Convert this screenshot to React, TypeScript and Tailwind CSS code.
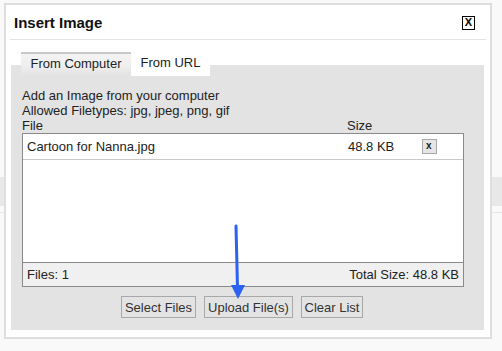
import React from "react";

export default function App() {
  return (
    <div
      className="relative w-[502px] h-[351px] bg-[#f9f9f9] overflow-hidden text-[#222]"
      style={{ fontFamily: '"Liberation Sans", Arial, sans-serif' }}
    >
      {/* page content behind the dialog */}
      <div className="pt-[177px]">
        <div className="h-[29px] bg-[#e8e8e8]" />
        <div className="mt-[6px] h-px bg-[#e4e4e4]" />
      </div>

      {/* dialog */}
      <div className="absolute left-[4px] top-[3px] w-[488px] h-[336px] bg-white border-2 border-[#dedede] flex flex-col">
        <div className="h-[34px] flex items-center justify-between pl-[8px] pr-[15px]">
          <span className="text-[15px] font-bold text-[#111] leading-none mt-[1px]">Insert Image</span>
          <span className="w-[13px] h-[14px] border border-black flex items-center justify-center text-[11px] font-bold text-black leading-none mt-[1px]">
            X
          </span>
        </div>
        <div className="mx-[4px] h-px bg-[#e3e3e3]" />

        {/* tabs */}
        <div className="relative z-10 mt-[12px] ml-[15px] flex h-[24px] text-[13px] leading-[17px]">
          <div className="w-[110px] border-t-2 border-[#c8c8c8] bg-linear-to-b from-[#f3f3f3] via-[#efefef] to-[#e3e3e3] text-center pt-[1px]">
            From Computer
          </div>
          <div className="w-[79px] mt-px bg-white text-center pt-[1px]">From URL</div>
        </div>

        {/* panel */}
        <div className="-mt-[11px] ml-[5px] mr-[6px] h-[265px] bg-[#e3e3e3] pl-[11px] pr-[20px] pt-[23px] text-[13px] leading-[15px]">
          <div>Add an Image from your computer</div>
          <div>Allowed Filetypes: jpg, jpeg, png, gif</div>
          <div className="flex">
            <div className="w-[325px]">File</div>
            <div>Size</div>
          </div>

          <div className="h-[154px] border border-[#8a8a8a] bg-white flex flex-col">
            <div className="h-[26px] border-b border-[#c8c8c8] flex items-center pl-[4px]">
              <div className="w-[321px]">Cartoon for Nanna.jpg</div>
              <div className="w-[74px]">48.8 KB</div>
              <div className="w-[15px] h-[15px] bg-[#e6e6e6] border border-[#a8a8a8] text-[10px] font-bold leading-[11px] pl-[3px] -mt-[1px]">
                x
              </div>
            </div>
            <div className="flex-1" />
            <div className="h-[24px] border-t border-[#8a8a8a] bg-[#f0f0f0] flex items-center justify-between px-[4px]">
              <span>Files: 1</span>
              <span>Total Size: 48.8 KB</span>
            </div>
          </div>

          <div className="mt-[9px] ml-[99px] flex gap-[8px]">
            <div className="h-[22px] w-[75px] border border-[#a8a8a8] flex items-center justify-center text-[#333]">
              Select Files
            </div>
            <div className="h-[22px] w-[89px] border border-[#a8a8a8] flex items-center justify-center text-[#333]">
              Upload File(s)
            </div>
            <div className="h-[22px] w-[62px] border border-[#a8a8a8] flex items-center justify-center text-[#333]">
              Clear List
            </div>
          </div>
        </div>
      </div>

      {/* annotation arrow */}
      <svg className="absolute left-[225px] top-[222px]" width="26" height="82" viewBox="0 0 26 82">
        <line x1="11" y1="4" x2="12.5" y2="66" stroke="#2b62f2" strokeWidth="3" strokeLinecap="round" />
        <polygon points="6,63 20,63 13,77" fill="#2b62f2" />
      </svg>
    </div>
  );
}
